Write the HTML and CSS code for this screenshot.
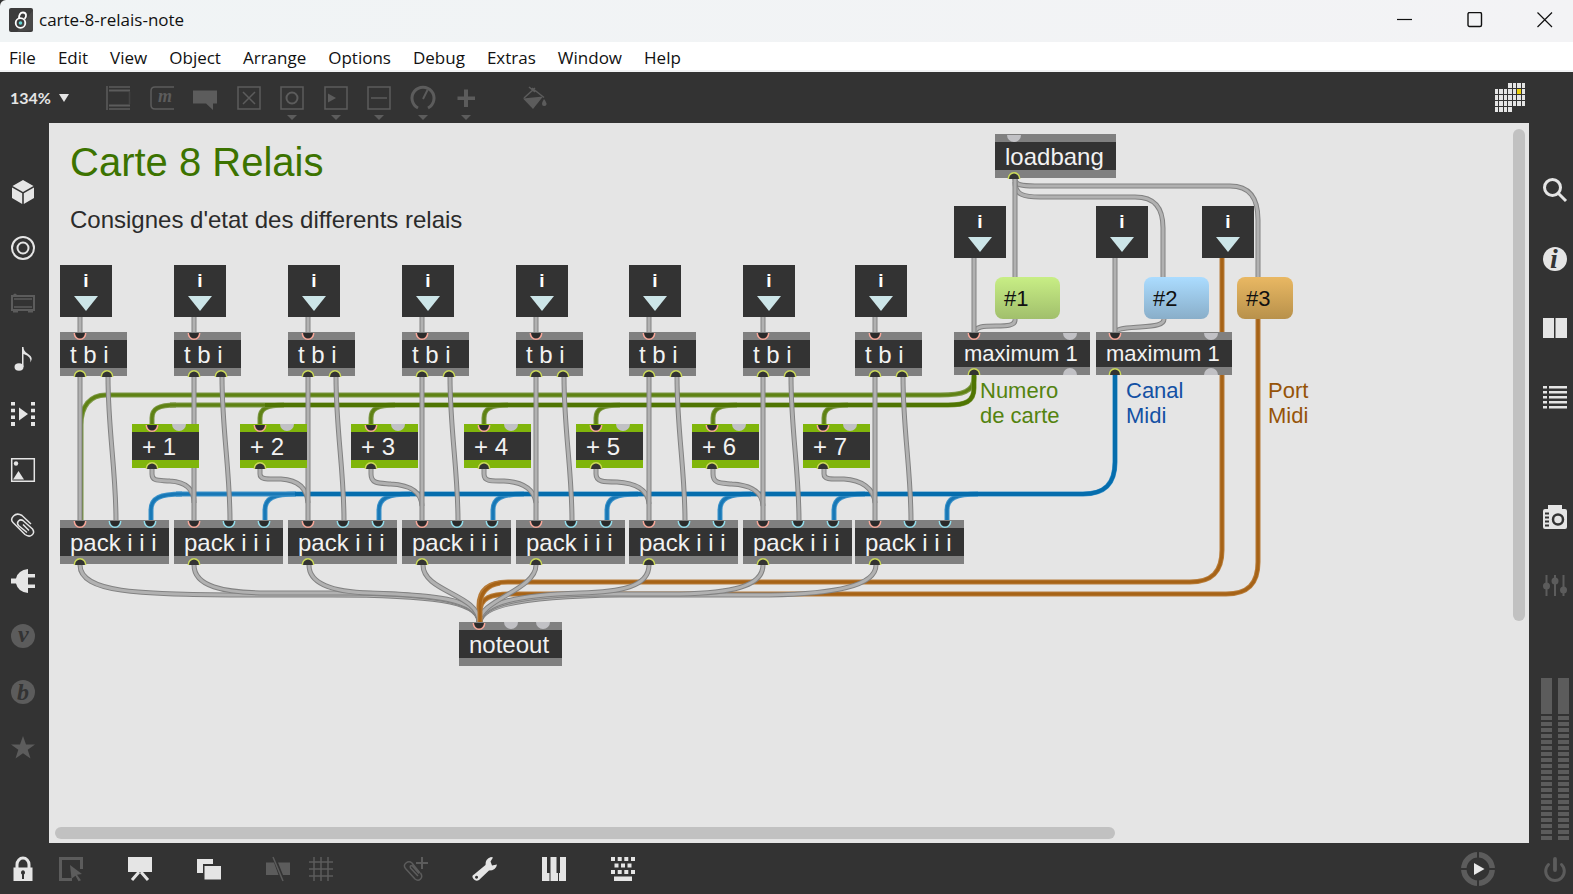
FILE: index.html
```html
<!DOCTYPE html>
<html lang="fr">
<head>
<meta charset="utf-8">
<title>carte-8-relais-note</title>
<link rel="stylesheet" href="styles.css">
</head>
<body>
<header class="titlebar">
  <svg class="app-icon" viewBox="0 0 24 24" aria-hidden="true"><rect width="24" height="24" rx="2" fill="#3c3c3c"/><path d="M24 2v20L8 24z" fill="#484848"/><circle cx="11.500" cy="15" r="4.800" fill="none" stroke="#fff" stroke-width="1.800"/><path d="M10 10.500C10 7 11 4.500 14 4.500c3.500 0 4 4 1.500 6.500" fill="none" stroke="#fff" stroke-width="1.800"/><circle cx="11.500" cy="15" r="1.800" fill="#5fd3d3"/></svg>
  <h1 class="title">carte-8-relais-note</h1>
  <div class="window-controls">
    <button aria-label="Minimize"><svg viewBox="0 0 16 16"><path d="M0 7.500h15"/></svg></button>
    <button aria-label="Maximize"><svg viewBox="0 0 16 16"><rect x="1" y=".5" width="13.500" height="14" rx="1.500" stroke-width="1.400"/></svg></button>
    <button aria-label="Close"><svg viewBox="0 0 16 16"><path d="M.5.5l14.500 14.500M15 .5L.5 15"/></svg></button>
  </div>
</header>
<nav class="menubar">
  <button>File</button><button>Edit</button><button>View</button><button>Object</button><button>Arrange</button><button>Options</button><button>Debug</button><button>Extras</button><button>Window</button><button>Help</button>
</nav>

<div class="toolbar">
  <button class="zoom">134% <svg viewBox="0 0 10 8"><path d="M0 0h10L5 8z"/></svg></button>
  <div class="palette">
    <button class="tool" aria-label="Object"><svg class="icon" viewBox="0 0 24 24"><path class="line" d="M3 1h21M3 23h21"/><path class="line2" d="M3 4.500h21M3 19.500h21"/><path class="line" d="M1 0v24"/><path class="line faint" d="M23.500 6v12"/></svg></button>
    <button class="tool" aria-label="Message"><svg class="icon" viewBox="0 0 24 24"><path class="line" d="M24 1H5Q1 1 1 5v14q0 4 4 4h19"/><text x="8" y="16" font-size="18">m</text></svg></button>
    <button class="tool" aria-label="Comment"><svg class="icon" viewBox="0 0 24 24"><path d="M0 4.500h24v13h-4v6.500l-7-6.500H0z"/></svg></button>
    <button class="tool" aria-label="Toggle"><svg class="icon" viewBox="0 0 24 24"><path class="line" d="M1 1h22v22H1zM6 6l12 12M18 6L6 18"/></svg></button>
    <button class="tool" aria-label="Button"><svg class="icon" viewBox="0 0 24 24"><path class="line" d="M1 1h22v22H1z"/><circle class="line2" cx="12" cy="12" r="5.500"/></svg><i class="more"></i></button>
    <button class="tool" aria-label="Number"><svg class="icon" viewBox="0 0 24 24"><path class="line" d="M1 1h22v22H1z"/><path d="M4 7.500l8 4.500-8 4.500z"/></svg><i class="more"></i></button>
    <button class="tool" aria-label="Slider"><svg class="icon" viewBox="0 0 24 24"><path class="line" d="M1 1h22v22H1zM4 12h16"/></svg><i class="more"></i></button>
    <button class="tool" aria-label="Dial"><svg class="icon" viewBox="0 0 24 24"><path class="line3" d="M7 22a11 11 0 1 1 10 0"/><path class="line2" d="M12 13l4.500-9"/></svg><i class="more"></i></button>
    <button class="tool" aria-label="Add"><svg class="icon" viewBox="0 0 24 24"><path d="M10 3.500h4v7h7v3.500h-7v7h-4v-7H3.500v-3.500H10z"/></svg><i class="more"></i></button>
  </div>
  <button class="tool paint" aria-label="Format"><svg class="icon" viewBox="0 0 24 24"><path class="line" d="M12 2L1 12M9 2l12 9.500M6 1l6 5"/><path d="M0 12.500l20-2L10 23z"/><path d="M21 13q3 4 2.500 5.500-.5 1.500-2.500 1.500t-2-2 2-5z"/></svg></button>
  <button class="mira" aria-label="Mira"><svg viewBox="0 0 30 29" fill="#e5e5e5"><defs><g id="cells"><path d="M0 0h3v5H0zM4 0h4v5H4zM9 0h3v5H9zM13 0h4v5h-4z"/></g><g id="cells-end"><path d="M13 0h4v5h-4zM18 0h3v5h-3zM22 0h4v5h-4zM27 0h3v5h-3z"/></g></defs><use href="#cells-end"/><use href="#cells" y="6"/><use href="#cells-end" y="6"/><use href="#cells" y="12"/><use href="#cells-end" y="12"/><use href="#cells" y="18"/><use href="#cells-end" y="18"/><use href="#cells" y="24"/><path d="M22 6h4v5h-4z" fill="#edd20d"/></svg></button>
</div>

<div class="workspace">
  <aside class="side side-left">
    <button aria-label="Packages"><svg class="icon" viewBox="0 0 24 24"><path d="M12 0l10.500 6L12 12 1.500 6zM1 7.500l10.200 5.800V24L1 18zM23 7.500l-10.200 5.800V24L23 18z"/></svg></button>
    <button aria-label="Objects"><svg class="icon" viewBox="0 0 24 24"><circle class="line2" cx="12" cy="12" r="11"/><circle class="line2" cx="12" cy="12" r="5.500"/></svg></button>
    <button class="off" aria-label="Devices"><svg class="icon" viewBox="0 0 24 24"><path class="line2" d="M1 5h22v14H1z"/><path class="line" d="M3 8h18M3 16h18"/><path d="M2 20h5v1.500H2zM17 20h5v1.500h-5zM2 4q2-3 4 0z"/></svg></button>
    <button aria-label="Audio"><svg class="icon" viewBox="0 0 24 24"><ellipse cx="8" cy="20" rx="4.500" ry="3.700"/><path d="M11 0h1.500q0 4 4 6.500 7 4.500 2.500 9 2-6-6.500-8.500V20H11z"/></svg></button>
    <button aria-label="Video"><svg class="icon" viewBox="0 0 24 24"><path d="M0 0h4v3.500H0zM0 6.700h4v3.500H0zM0 13.400h4v3.500H0zM0 20.100h4v3.900H0zM20 0h4v3.500h-4zM20 6.700h4v3.500h-4zM20 13.400h4v3.500h-4zM20 20.100h4v3.900h-4zM8 5.500l9 6.500-9 6.500z"/></svg></button>
    <button aria-label="Images"><svg class="icon" viewBox="0 0 24 24"><path class="line" d="M.7.700h22.600v22.600H.7z"/><circle cx="5" cy="5.500" r="2.200"/><path d="M2 21.500L7.500 13l5.500 8.500z"/></svg></button>
    <button aria-label="Attachments"><svg class="icon" viewBox="0 0 24 24"><path class="line" d="M20 11L11 2.500Q6-.5 2.500 3T2 9.500l12 12q4 3 7 .5t.5-6L12 7.500Q9.500 6 7.500 8t0 4.500l8.500 7M12 11.500l6 6"/></svg></button>
    <button aria-label="Plug-ins"><svg class="icon" viewBox="0 0 24 24"><path d="M17 0v5h7v3.500h-7v7h7V19h-7v5Q7 23 5 14.500H0v-5h5Q7 1 17 0z"/></svg></button>
    <button class="off" aria-label="Vizzie"><svg class="icon" viewBox="0 0 24 24"><circle cx="12" cy="12" r="12"/><text class="cut" x="7" y="18" font-size="22">v</text></svg></button>
    <button class="off" aria-label="Beap"><svg class="icon" viewBox="0 0 24 24"><circle cx="12" cy="12" r="12"/><text class="cut" x="6" y="20" font-size="24">b</text></svg></button>
    <button class="off" aria-label="Favorites"><svg class="icon" viewBox="0 0 24 24"><path d="M12 1l3 8.500h9l-7.300 5.300L19.500 23.500 12 18.200 4.500 23.500l2.800-8.700L0 9.500h9z"/></svg></button>
  </aside>

  <main class="canvas">
    <svg class="layer" viewBox="49 123 1480 720">
      <defs>
        <path id="w-i" d="M80 317V333"/>
        <path id="w-a" d="M80 377V521"/>
        <path id="w-b" d="M108 377C108 430 116 470 116 521"/>
        <g id="cords" class="gray">
          <use href="#w-i" class="edge"/><use href="#w-i" class="core"/>
          <use href="#w-a" class="edge"/><use href="#w-a" class="core"/>
          <use href="#w-b" class="edge"/><use href="#w-b" class="core"/>
        </g>
        <path id="stub-g" d="M176 405C158 405 152 409 152 418V425"/>
        <path id="stub-b" d="M182 494C160 494 151 498 151 510V521"/>
        <path id="p1" d="M152 468V474C152 482 160 480 170 481C185 482 194 488 194 503"/>
        <path id="p2" d="M260 468V474C260 480 268 479 281 479C297 480 307 487 308 503"/>
        <path id="p3" d="M371 468V474C371 484 379 483 391 484C408 485 421 490 422 506"/>
        <path id="p4" d="M484 468V474C484 482 492 481 504 481C521 482 534 488 536 503"/>
        <path id="p5" d="M596 468V474C596 482 604 482 617 482C634 483 648 489 649 504"/>
        <path id="p6" d="M713 468V474C713 484 721 483 732 484C749 485 762 490 763 506"/>
        <path id="p7" d="M824 468V474C824 480 832 479 844 479C861 480 874 488 875 503"/>
        <path id="f1" d="M80 565C80 593 140 594 230 595H330C430 595 479 601 479 622"/>
        <path id="f2" d="M194 565C194 587 225 592 260 593H350C430 594 479 600 479 622"/>
        <path id="f3" d="M309 565C309 585 335 592 370 593C430 595 479 598 479 622"/>
        <path id="f4" d="M423 565C423 592 479 594 479 622"/>
        <path id="f5" d="M536 565C536 590 479 600 479 622"/>
        <path id="f6" d="M649 565C649 587 620 592 580 593C520 595 481 602 480 622"/>
        <path id="f7" d="M763 565C763 587 730 593 680 594H600C520 595 481 604 480 622"/>
        <path id="f8" d="M876 565C876 587 830 594 770 595H620C530 596 482 604 480 622"/>
        <path id="l1" d="M1015 179V278"/>
        <path id="l2" d="M1015 182C1015 195 1024 197 1040 197H1135C1155 197 1163 208 1163 228V278"/>
        <path id="l3" d="M1015 179C1015 185 1022 186 1035 186H1230C1250 186 1258 198 1258 220V278"/>
        <path id="m1" d="M1015 319C1016 326 1006 326 996 326C984 326 975 326 974 334"/>
        <path id="m2" d="M1164 319C1164 325 1155 326 1140 327C1125 328 1116 328 1115 334"/>
        <path id="n1" d="M974 257V334"/>
        <path id="n2" d="M1115 257V334"/>
      </defs>

      <g class="green">
        <path class="edge" d="M974 376C975 392 962 395 940 395H106C90 395 81 406 81 425V520"/>
        <path class="core" d="M974 376C975 392 962 395 940 395H106C90 395 81 406 81 425V520"/>
        <use href="#stub-g" class="edge"/><use href="#stub-g" class="edge" x="108"/><use href="#stub-g" class="edge" x="219"/><use href="#stub-g" class="edge" x="332"/><use href="#stub-g" class="edge" x="444"/><use href="#stub-g" class="edge" x="561"/><use href="#stub-g" class="edge" x="672"/>
        <use href="#stub-g" class="core"/><use href="#stub-g" class="core" x="108"/><use href="#stub-g" class="core" x="219"/><use href="#stub-g" class="core" x="332"/><use href="#stub-g" class="core" x="444"/><use href="#stub-g" class="core" x="561"/><use href="#stub-g" class="core" x="672"/>
        <path class="edge" d="M974 374V388C974 402 965 405 948 405H170"/>
        <path class="core" d="M265 405H170"/>
        <path class="deep" d="M974 374V388C974 402 965 405 948 405H265"/>
      </g>
      <g class="blue">
        <use href="#stub-b" class="edge"/><use href="#stub-b" class="edge" x="114"/><use href="#stub-b" class="edge" x="228"/><use href="#stub-b" class="edge" x="342"/><use href="#stub-b" class="edge" x="456"/><use href="#stub-b" class="edge" x="569"/><use href="#stub-b" class="edge" x="683"/><use href="#stub-b" class="edge" x="796"/>
        <use href="#stub-b" class="core"/><use href="#stub-b" class="core" x="114"/><use href="#stub-b" class="core" x="228"/><use href="#stub-b" class="core" x="342"/><use href="#stub-b" class="core" x="456"/><use href="#stub-b" class="core" x="569"/><use href="#stub-b" class="core" x="683"/><use href="#stub-b" class="core" x="796"/>
        <path class="edge" d="M1115 374V462C1115 484 1105 494 1083 494H176"/>
        <path class="core" d="M295 494H176"/>
        <path class="deep" d="M1115 374V462C1115 484 1105 494 1083 494H295"/>
      </g>
      <g class="orange">
        <path class="edge" d="M1222 257V550C1222 572 1212 582 1190 582H508C490 582 479 588 479 606V622M1258 318V562C1258 584 1248 594 1226 594H512C490 594 480 598 480 612"/>
        <path class="core" d="M1222 257V550C1222 572 1212 582 1190 582H508C490 582 479 588 479 606V622M1258 318V562C1258 584 1248 594 1226 594H512C490 594 480 598 480 612"/>
      </g>
      <g class="gray">
        <use href="#p1" class="edge"/><use href="#p1" class="core"/>
        <use href="#p2" class="edge"/><use href="#p2" class="core"/>
        <use href="#p3" class="edge"/><use href="#p3" class="core"/>
        <use href="#p4" class="edge"/><use href="#p4" class="core"/>
        <use href="#p5" class="edge"/><use href="#p5" class="core"/>
        <use href="#p6" class="edge"/><use href="#p6" class="core"/>
        <use href="#p7" class="edge"/><use href="#p7" class="core"/>
        <use href="#cords"/><use href="#cords" x="114"/><use href="#cords" x="228"/><use href="#cords" x="342"/><use href="#cords" x="456"/><use href="#cords" x="569"/><use href="#cords" x="683"/><use href="#cords" x="795"/>
        <use href="#f8" class="edge"/><use href="#f8" class="core"/>
        <use href="#f7" class="edge"/><use href="#f7" class="core"/>
        <use href="#f6" class="edge"/><use href="#f6" class="core"/>
        <use href="#f5" class="edge"/><use href="#f5" class="core"/>
        <use href="#f1" class="edge"/><use href="#f1" class="core"/>
        <use href="#f2" class="edge"/><use href="#f2" class="core"/>
        <use href="#f3" class="edge"/><use href="#f3" class="core"/>
        <use href="#f4" class="edge"/><use href="#f4" class="core"/>
        <use href="#l3" class="edge"/><use href="#l3" class="core"/>
        <use href="#l2" class="edge"/><use href="#l2" class="core"/>
        <use href="#l1" class="edge"/><use href="#l1" class="core"/>
        <use href="#m1" class="edge"/><use href="#m1" class="core"/>
        <use href="#m2" class="edge"/><use href="#m2" class="core"/>
        <use href="#n1" class="edge"/><use href="#n1" class="core"/>
        <use href="#n2" class="edge"/><use href="#n2" class="core"/>
      </g>
      <g class="orange">
        <path class="edge" d="M500 583C487 585 480 592 480 606V622"/>
        <path class="core" d="M500 583C487 585 480 592 480 606V622"/>
      </g>
    </svg>

    <h2 class="note heading">Carte 8 Relais</h2>
    <p class="note sub">Consignes d'etat des differents relais</p>
    <p class="note card-label">Numero<br>de carte</p>
    <p class="note channel-label">Canal<br>Midi</p>
    <p class="note port-label">Port<br>Midi</p>

    <div class="inlet row1 c1">i</div><div class="inlet row1 c2">i</div><div class="inlet row1 c3">i</div><div class="inlet row1 c4">i</div><div class="inlet row1 c5">i</div><div class="inlet row1 c6">i</div><div class="inlet row1 c7">i</div><div class="inlet row1 c8">i</div>
    <div class="inlet row0 c9">i</div><div class="inlet row0 c10">i</div><div class="inlet row0 c11">i</div>

    <div class="obj trig c1">t b i</div><div class="obj trig c2">t b i</div><div class="obj trig c3">t b i</div><div class="obj trig c4">t b i</div><div class="obj trig c5">t b i</div><div class="obj trig c6">t b i</div><div class="obj trig c7">t b i</div><div class="obj trig c8">t b i</div>

    <div class="obj plus a1">+ 1</div><div class="obj plus a2">+ 2</div><div class="obj plus a3">+ 3</div><div class="obj plus a4">+ 4</div><div class="obj plus a5">+ 5</div><div class="obj plus a6">+ 6</div><div class="obj plus a7">+ 7</div>

    <div class="obj pack c1">pack i i i</div><div class="obj pack c2">pack i i i</div><div class="obj pack c3">pack i i i</div><div class="obj pack c4">pack i i i</div><div class="obj pack c5">pack i i i</div><div class="obj pack c6">pack i i i</div><div class="obj pack c7">pack i i i</div><div class="obj pack c8">pack i i i</div>

    <div class="obj noteout">noteout</div>
    <div class="obj loadbang">loadbang</div>
    <div class="obj max c9">maximum 1</div>
    <div class="obj max c10">maximum 1</div>
    <button class="msg lime">#1</button>
    <button class="msg sky">#2</button>
    <button class="msg amber">#3</button>

    <svg class="layer" viewBox="49 123 1480 720">
      <defs>
        <g id="in"><path d="M-5.700 0a5.700 6.200 0 0 0 11.400 0z" stroke="none"/><path d="M-5.700 0a5.700 6.200 0 0 0 11.400 0" stroke-width="1.500" fill="none"/></g>
        <g id="out"><path d="M-5.700 0a5.700 6.200 0 0 1 11.400 0z" stroke="none"/><path d="M-5.700 0a5.700 6.200 0 0 1 11.400 0" stroke-width="1.500" fill="none"/></g>
        <path id="free-in" d="M-7 0a7 7 0 0 0 14 0z"/>
        <path id="free-out" d="M-7 0a7 7 0 0 1 14 0z"/>
        <g id="ports">
          <use href="#in" class="hot" x="80" y="333"/><use href="#out" class="outlet" x="80" y="377"/><use href="#out" class="outlet" x="107" y="377"/>
          <use href="#in" class="hot" x="80" y="521"/><use href="#in" class="cold" x="115" y="521"/><use href="#in" class="cold" x="150" y="521"/><use href="#out" class="outlet" x="80" y="565"/>
        </g>
        <g id="plus-ports"><use href="#in" class="hot" x="152" y="425"/><use href="#free-in" class="free" x="179" y="424"/><use href="#out" class="outlet" x="152" y="469"/></g>
      </defs>
      <use href="#ports"/><use href="#ports" x="114"/><use href="#ports" x="228"/><use href="#ports" x="342"/><use href="#ports" x="456"/><use href="#ports" x="569"/><use href="#ports" x="683"/><use href="#ports" x="795"/>
      <use href="#plus-ports"/><use href="#plus-ports" x="108"/><use href="#plus-ports" x="219"/><use href="#plus-ports" x="332"/><use href="#plus-ports" x="444"/><use href="#plus-ports" x="560"/><use href="#plus-ports" x="671"/>
      <use href="#in" class="hot" x="479" y="623"/><use href="#free-in" class="free" x="511" y="622"/><use href="#free-in" class="free" x="543" y="622"/>
      <use href="#free-in" class="free" x="1014" y="135"/><use href="#out" class="outlet" x="1014" y="179"/>
      <use href="#in" class="hot" x="974" y="333"/><use href="#free-in" class="free" x="1070" y="333"/><use href="#out" class="outlet" x="974" y="375"/><use href="#free-out" class="free" x="1070" y="375"/>
      <use href="#in" class="hot" x="1115" y="333"/><use href="#free-in" class="free" x="1211" y="333"/><use href="#out" class="outlet" x="1115" y="375"/><use href="#free-out" class="free" x="1211" y="375"/>
    </svg>

    <div class="scroll vertical"></div>
    <div class="scroll horizontal"></div>
  </main>

  <aside class="side side-right">
    <button aria-label="Search"><svg class="icon" viewBox="0 0 24 24"><circle class="line3" cx="9.500" cy="9.500" r="8"/><path class="line3" d="M15.500 15.500l7.500 7.500"/></svg></button>
    <button aria-label="Inspector"><svg class="icon" viewBox="0 0 24 24"><circle cx="12" cy="12" r="12"/><text class="cut big" x="7" y="21">i</text></svg></button>
    <button aria-label="Reference"><svg class="icon" viewBox="0 0 24 24"><path d="M0 2h11v20H0zM12.500 2H24v20H12.500z"/></svg></button>
    <button aria-label="Console"><svg class="icon" viewBox="0 0 24 24"><path d="M0 1h4v2.500H0zM6 1h18v2.500H6zM0 6h4v2.500H0zM6 6h18v2.500H6zM0 11h4v2.500H0zM6 11h18v2.500H6zM0 16h4v2.500H0zM6 16h18v2.500H6zM0 21h4v2.500H0zM6 21h18v2.500H6z"/></svg></button>
    <button class="apart" aria-label="Snapshots"><svg class="icon" viewBox="0 0 24 24"><path d="M5 0h14v4h3q2 0 2 2v16q0 2-2 2H2q-2 0-2-2V6q0-2 2-2h3z"/><circle cx="15" cy="14.500" r="5" fill="none" stroke="#333" stroke-width="2.500"/><path stroke="#333" stroke-width="1.800" d="M2 8.500h4M2 12.500h4M2 16.500h4M2 20.500h4"/></svg></button>
    <button class="off" aria-label="Parameters"><svg class="icon" viewBox="0 0 24 24"><path class="line2" d="M3.500 1v21M12 1v21M20.500 1v21"/><circle cx="3.500" cy="12" r="3.500"/><circle cx="12" cy="7" r="3.500"/><circle cx="20.500" cy="16" r="3.500"/></svg></button>
    <div class="meters"><span class="meter"></span><span class="meter"></span></div>
  </aside>
</div>

<footer class="bottombar">
  <div class="group g-lock">
    <button aria-label="Lock"><svg class="icon" viewBox="0 0 24 24"><path class="line3" d="M6 12V7.500a6 6.500 0 0 1 12 0V12"/><path fill-rule="evenodd" d="M2.500 10.500h19V24h-19zM12 13.200a2.300 2.300 0 0 0-1 4.200V22h2v-4.600a2.300 2.300 0 0 0-1-4.200z"/></svg></button>
    <button class="off" aria-label="Select"><svg class="icon" viewBox="0 0 24 24"><path class="line3" d="M22.500 12V1.500h-21v21H13"/><path d="M11 8l12 9-5 .7 4 5.600-2.500 1-3-5.500-4 3z"/></svg></button>
  </div>
  <div class="group">
    <button aria-label="Presentation"><svg class="icon" viewBox="0 0 24 24"><path d="M0 0h24v15H0z"/><path class="line3" d="M11 15l-7 8M13 15l7 8"/></svg></button>
    <button aria-label="Layers"><svg class="icon" viewBox="0 0 24 24"><path d="M0 2h16v5H6v9H0zM7.500 9H24v13.500H7.500z"/></svg></button>
    <button class="off" aria-label="Mute"><svg class="icon" viewBox="0 0 24 24"><path d="M0 5.500h8L12.500 18H0zM12 5.500h12V18h-7z"/><path class="line" d="M7 0l10 24"/></svg></button>
    <button class="off pull" aria-label="Grid"><svg class="icon" viewBox="0 0 24 24"><path class="line" d="M5 0v24M12 0v24M19 0v24M0 5h24M0 12h24M0 19h24"/></svg></button>
    <button class="off push" aria-label="Add snippet"><svg class="icon" viewBox="0 0 24 24"><path class="line" d="M16 16L8 6Q5 3.500 2 6t-.5 5.500L11 22q3 2.500 5.500 0t0-6M14 19L6.500 11Q5.500 8.500 8 8.500l7 8"/><path class="line2" d="M18 0v12M12 6h12"/></svg></button>
    <button aria-label="Tools"><svg class="icon" viewBox="0 0 24 24"><path fill-rule="evenodd" d="M12.500 8Q12 2 18 0l2 .5-2.500 4 1.500 4 5-1q-1 6-8 6L6 23q-3 2-5.500-1T1 17.500zM3.500 18.800a1.500 1.500 0 1 0 .1 0z"/></svg></button>
    <button aria-label="Keyboard"><svg class="icon" viewBox="0 0 24 24"><path d="M0 0h5v16h2.500v8H0zM8.500 0h6v16H16v8H8.500v-8zM18 0h6v24h-7v-8h1z"/></svg></button>
    <button aria-label="Key entry"><svg class="icon" viewBox="0 0 24 24"><path d="M0 0h4v4H0zM6.700 0h4v4h-4zM13.300 0h4v4h-4zM20 0h4v4h-4zM3.500 6.500h4v4h-4zM10 6.500h4v4h-4zM16.500 6.500h4v4h-4zM0 13h4v4H0zM6.700 13h4v4h-4zM13.300 13h4v4h-4zM20 13h4v4h-4zM3 19.500h18V24H3z"/></svg></button>
  </div>
  <div class="group g-audio">
    <button class="transport" aria-label="Transport"><svg viewBox="0 0 34 34"><circle cx="17" cy="17" r="14.200" fill="none" stroke="#5c5c5c" stroke-width="5.500"/><path d="M17 0v34M0 17h34" stroke="#333" stroke-width="2"/><circle cx="17" cy="17" r="10.500" fill="#333"/><path d="M13 11l10.500 6L13 23z" fill="#e8e8e8"/></svg></button>
    <button class="off" aria-label="Audio power"><svg class="icon" viewBox="0 0 24 24"><path class="line3" stroke-linecap="round" d="M5.500 7.500a9.300 9.300 0 1 0 13 0"/><path stroke="currentColor" stroke-width="3.800" stroke-linecap="round" d="M12 2v11"/></svg></button>
  </div>
</footer>
</body>
</html>
```
FILE: styles.css
```css
* { box-sizing: border-box; }

html, body { height: 100%; }

body {
  margin: 0;
  display: flex;
  flex-direction: column;
  background: #333;
  color: #e5e5e5;
  font-family: "Liberation Sans", Arial, sans-serif;
  overflow: hidden;
}

button {
  margin: 0;
  padding: 0;
  border: 0;
  background: none;
  color: inherit;
  font: inherit;
  display: block;
}

svg { display: block; }

.titlebar {
  flex: none;
  height: 42px;
  display: flex;
  align-items: center;
  padding: 0 20px 2px 9px;
  gap: 6px;
  background: linear-gradient(90deg, #f0f4f5, #f3f3f5);
  color: #111;
  border-top-left-radius: 6px;
}

.app-icon { width: 24px; height: 24px; }

.title {
  margin: 0;
  flex: 1;
  font: 400 17px/24px "Open Sans", sans-serif;
}

.window-controls { display: flex; gap: 54px; }
.window-controls svg {
  width: 16px;
  height: 16px;
  fill: none;
  stroke: #111;
  stroke-width: 1.2;
}

.menubar {
  flex: none;
  height: 30px;
  display: flex;
  gap: 22px;
  padding: 3px 9px 0;
  background: #fff;
  border-bottom: 2px solid #f1f3f4;
  color: #111;
  font: 400 17px/25px "Open Sans", sans-serif;
}

.toolbar {
  flex: none;
  height: 51px;
  display: flex;
  align-items: center;
  padding: 0 48px 0 10px;
  color: #5c5c5c;
}

.zoom {
  width: 96px;
  display: flex;
  align-items: center;
  gap: 8px;
  color: #e5e5e5;
  font: 700 16px/24px Lato, sans-serif;
}
.zoom svg { width: 10px; height: 8px; fill: currentColor; }

.palette { width: 372px; display: flex; justify-content: space-between; }
.tool { position: relative; }
.paint { margin-left: 45px; }
.more {
  position: absolute;
  left: 7px;
  top: 29px;
  border: 5px solid transparent;
  border-top-color: currentColor;
  border-bottom: 0;
}
.mira { margin-left: auto; }
.mira svg { width: 30px; height: 29px; }

.icon { width: 24px; height: 24px; fill: currentColor; overflow: visible; }
.icon text { font: italic 700 24px "Liberation Serif", serif; }
.icon text[font-size="18"] { font-size: 18px; }
.icon .big { font-size: 28px; }
.icon .cut { fill: #333; }
.line, .line2, .line3 { fill: none; stroke: currentColor; }
.line { stroke-width: 1.5; }
.line2 { stroke-width: 2; }
.line3 { stroke-width: 3; }
.faint { opacity: 0.4; }
.off { color: #5c5c5c; }

.workspace { flex: 1; min-height: 0; display: flex; }

.side { flex: none; display: flex; flex-direction: column; }
.side-left {
  width: 49px;
  padding: 57px 14px 84px 11px;
  justify-content: space-between;
}
.side-right {
  width: 44px;
  padding: 55px 4px 3px 14px;
  gap: 45px;
}
.side-right .apart { margin-top: 51px; }
.meters { margin: auto 0 0 0; display: flex; gap: 6px; align-self: flex-end; }
.meter {
  width: 11px;
  height: 162px;
  background:
    linear-gradient(#5c5c5c, #5c5c5c) 0 0 / 11px 36px no-repeat,
    repeating-linear-gradient(transparent 0 2px, #5c5c5c 2px 6px);
}

.canvas {
  flex: 1;
  min-width: 0;
  position: relative;
  overflow: hidden;
  background: #e5e5e5;
}
.layer {
  position: absolute;
  left: 0;
  top: 0;
  width: 1480px;
  height: 720px;
  fill: none;
  pointer-events: none;
}

.edge { stroke-width: 5; }
.core { stroke-width: 3; }
.deep { stroke-width: 4; }
.gray .edge { stroke: #828282; }
.gray .core { stroke: #b1b1b1; }
.green .edge { stroke: #7d9846; }
.green .core { stroke: #5f8214; }
.green .deep { stroke: #4f7502; }
.blue .edge { stroke: #3d93ca; }
.blue .core { stroke: #1878b6; }
.blue .deep { stroke: #056dad; }
.orange .edge { stroke: #b87d3a; }
.orange .core { stroke: #a66317; }

.hot { fill: #2b2b2b; stroke: #f6a698; }
.cold { fill: #2b2b2b; stroke: #92dcea; }
.outlet { fill: #333; stroke: #cbd95a; }
.free { fill: #c1c1c5; }

.note, .obj, .inlet, .msg, .scroll { position: absolute; margin: 0; }
.note { font-weight: 400; white-space: nowrap; }
.heading { left: 21px; top: 16px; font-size: 40px; line-height: 46px; color: #3c7300; }
.sub { left: 21px; top: 83px; font-size: 24px; line-height: 28px; color: #2b2b2b; }
.card-label, .channel-label, .port-label { top: 255px; font-size: 22px; line-height: 25px; }
.card-label { left: 931px; color: #54830f; }
.channel-label { left: 1077px; color: #1451a4; }
.port-label { left: 1219px; color: #965409; }

.inlet {
  width: 52px;
  height: 52px;
  padding-top: 5px;
  background: #333;
  color: #fff;
  text-align: center;
  font-size: 19px;
  font-weight: 700;
  line-height: 22px;
}
.inlet::after {
  content: "";
  display: block;
  width: 0;
  margin: 4px auto 0;
  border: 12px solid transparent;
  border-top: 15px solid #cce5e8;
  border-bottom: 0;
}

.obj {
  height: 44px;
  padding-left: 10px;
  border: solid #808080;
  border-width: 8px 0;
  background: #333;
  color: #f2f2f2;
  font-size: 24px;
  line-height: 30px;
  white-space: nowrap;
}
.trig { top: 209px; width: 67px; }
.plus { top: 301px; width: 67px; border-color: #80b50b; }
.pack { top: 397px; width: 109px; }
.noteout { left: 410px; top: 499px; width: 103px; }
.loadbang { left: 946px; top: 11px; width: 121px; }
.max { top: 209px; width: 136px; height: 43px; font-size: 22px; line-height: 28px; }

.row0 { top: 83px; }
.row1 { top: 142px; }
.c1 { left: 11px; }
.c2 { left: 125px; }
.c3 { left: 239px; }
.c4 { left: 353px; }
.c5 { left: 467px; }
.c6 { left: 580px; }
.c7 { left: 694px; }
.c8 { left: 806px; }
.c9 { left: 905px; }
.c10 { left: 1047px; }
.c11 { left: 1153px; }
.a1 { left: 83px; }
.a2 { left: 191px; }
.a3 { left: 302px; }
.a4 { left: 415px; }
.a5 { left: 527px; }
.a6 { left: 643px; }
.a7 { left: 754px; }

.msg {
  top: 154px;
  width: 65px;
  height: 42px;
  padding-left: 9px;
  border-radius: 8px;
  color: #111;
  font-size: 22px;
  line-height: 44px;
  text-align: left;
}
.lime { left: 946px; background: linear-gradient(#c8ee85, #a1bf6c); }
.sky { left: 1095px; background: linear-gradient(#abdcff, #89aec9); }
.amber { left: 1188px; width: 56px; background: linear-gradient(#e9b863, #b8914b); }

.scroll { background: #c1c1c1; border-radius: 6px; }
.vertical { right: 4px; top: 6px; width: 12px; height: 492px; }
.horizontal { left: 6px; bottom: 4px; width: 1060px; height: 12px; }

.bottombar {
  flex: none;
  height: 51px;
  display: flex;
  align-items: center;
  padding: 0 6px 0 11px;
}
.group { display: flex; align-items: center; gap: 45px; }
.g-lock { gap: 24px; margin-right: 45px; }
.pull { margin-left: -26px; }
.push { margin-left: 26px; }
.g-audio { margin-left: auto; gap: 48px; }
.transport svg { width: 34px; height: 34px; }
```
